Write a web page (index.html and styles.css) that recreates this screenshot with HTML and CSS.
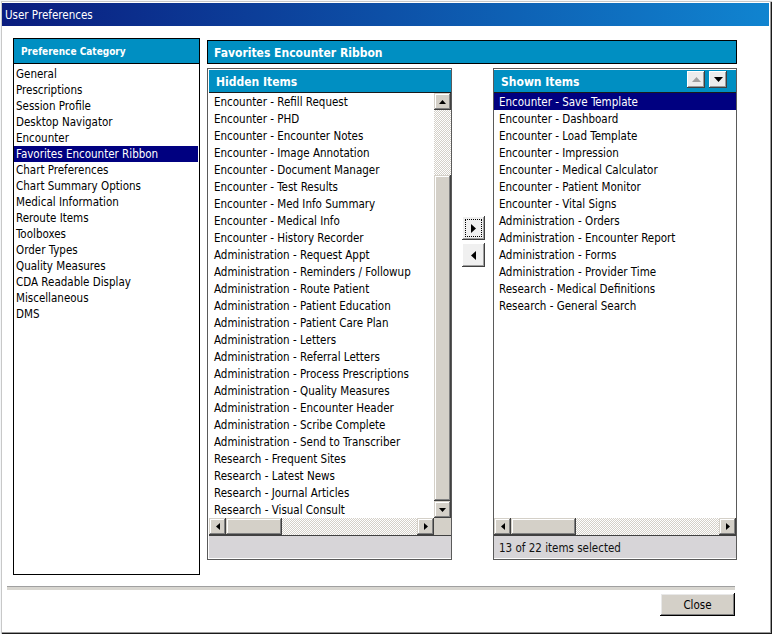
FILE: index.html
```html
<!DOCTYPE html>
<html>
<head>
<meta charset="utf-8">
<link rel="stylesheet" href="styles.css">
</head>
<body>
<div class="window">
  <div class="titlebar">User Preferences</div>
  <div class="client">
    <div class="main">
      <div class="cat-panel">
        <div class="cat-header">Preference Category</div>
        <ul class="cat-list">
          <li>General</li>
          <li>Prescriptions</li>
          <li>Session Profile</li>
          <li>Desktop Navigator</li>
          <li>Encounter</li>
          <li class="sel">Favorites Encounter Ribbon</li>
          <li>Chart Preferences</li>
          <li>Chart Summary Options</li>
          <li>Medical Information</li>
          <li>Reroute Items</li>
          <li>Toolboxes</li>
          <li>Order Types</li>
          <li>Quality Measures</li>
          <li>CDA Readable Display</li>
          <li>Miscellaneous</li>
          <li>DMS</li>
        </ul>
      </div>
      <div class="right">
        <div class="ribbon-header">Favorites Encounter Ribbon</div>
        <div class="lists">
          <div class="panel panel-hidden">
            <div class="panel-header">Hidden Items</div>
            <div class="list-wrap">
              <ul class="items">
                <li>Encounter - Refill Request</li>
                <li>Encounter - PHD</li>
                <li>Encounter - Encounter Notes</li>
                <li>Encounter - Image Annotation</li>
                <li>Encounter - Document Manager</li>
                <li>Encounter - Test Results</li>
                <li>Encounter - Med Info Summary</li>
                <li>Encounter - Medical Info</li>
                <li>Encounter - History Recorder</li>
                <li>Administration - Request Appt</li>
                <li>Administration - Reminders / Followup</li>
                <li>Administration - Route Patient</li>
                <li>Administration - Patient Education</li>
                <li>Administration - Patient Care Plan</li>
                <li>Administration - Letters</li>
                <li>Administration - Referral Letters</li>
                <li>Administration - Process Prescriptions</li>
                <li>Administration - Quality Measures</li>
                <li>Administration - Encounter Header</li>
                <li>Administration - Scribe Complete</li>
                <li>Administration - Send to Transcriber</li>
                <li>Research - Frequent Sites</li>
                <li>Research - Latest News</li>
                <li>Research - Journal Articles</li>
                <li>Research - Visual Consult</li>
              </ul>
              <div class="vscroll">
                <div class="sb-btn"><svg width="7" height="4" viewBox="0 0 7 4"><polygon points="3.5,0 7,4 0,4" fill="#000"/></svg></div>
                <div class="track vtrack-top"></div>
                <div class="thumb vthumb"></div>
                <div class="sb-btn"><svg width="7" height="4" viewBox="0 0 7 4"><polygon points="0,0 7,0 3.5,4" fill="#000"/></svg></div>
              </div>
            </div>
            <div class="hscroll">
              <div class="sb-btn"><svg width="4" height="7" viewBox="0 0 4 7"><polygon points="4,0 4,7 0,3.5" fill="#000"/></svg></div>
              <div class="thumb hthumb-hidden"></div>
              <div class="track htrack"></div>
              <div class="sb-btn"><svg width="4" height="7" viewBox="0 0 4 7"><polygon points="0,0 4,3.5 0,7" fill="#000"/></svg></div>
              <div class="corner"></div>
            </div>
            <div class="status"></div>
          </div>

          <div class="mover">
            <div class="move-btn focus"><svg width="5" height="9" viewBox="0 0 5 9"><polygon points="0,0 5,4.5 0,9" fill="#000"/></svg></div>
            <div class="move-btn"><svg width="5" height="9" viewBox="0 0 5 9"><polygon points="5,0 5,9 0,4.5" fill="#000"/></svg></div>
          </div>

          <div class="panel panel-shown">
            <div class="panel-header">
              <span class="ph-title">Shown Items</span>
              <div class="order-btn"><svg width="9" height="5" viewBox="0 0 9 5"><polygon points="4.5,0 9,5 0,5" fill="#a0a0a0"/></svg></div>
              <div class="order-btn"><svg width="9" height="5" viewBox="0 0 9 5"><polygon points="0,0 9,0 4.5,5" fill="#000"/></svg></div>
            </div>
            <div class="list-wrap">
              <ul class="items">
                <li class="sel">Encounter - Save Template</li>
                <li>Encounter - Dashboard</li>
                <li>Encounter - Load Template</li>
                <li>Encounter - Impression</li>
                <li>Encounter - Medical Calculator</li>
                <li>Encounter - Patient Monitor</li>
                <li>Encounter - Vital Signs</li>
                <li>Administration - Orders</li>
                <li>Administration - Encounter Report</li>
                <li>Administration - Forms</li>
                <li>Administration - Provider Time</li>
                <li>Research - Medical Definitions</li>
                <li>Research - General Search</li>
              </ul>
            </div>
            <div class="hscroll">
              <div class="sb-btn"><svg width="4" height="7" viewBox="0 0 4 7"><polygon points="4,0 4,7 0,3.5" fill="#000"/></svg></div>
              <div class="thumb hthumb-shown"></div>
              <div class="track htrack"></div>
              <div class="sb-btn"><svg width="4" height="7" viewBox="0 0 4 7"><polygon points="0,0 4,3.5 0,7" fill="#000"/></svg></div>
            </div>
            <div class="status">13 of 22 items selected</div>
          </div>
        </div>
      </div>
    </div>
    <div class="sep"></div>
    <div class="btnrow"><button class="close-btn">Close</button></div>
  </div>
</div>
</body>
</html>
```
FILE: styles.css
```css
* { box-sizing: border-box; margin: 0; padding: 0; }
html, body { width: 772px; height: 634px; overflow: hidden; }
body {
  background: #fff;
  font-family: "DejaVu Sans Condensed", "DejaVu Sans", sans-serif;
  font-size: 11.5px;
  color: #000;
}
ul { list-style: none; }

.window {
  width: 772px;
  height: 634px;
  display: flex;
  flex-direction: column;
  padding: 3px 3px 3px 2px;
  background: #fff;
  box-shadow: inset 1px 1px #f4f6f8, inset 2px 2px #c8c8c8, inset -1px -1px #1a1a1a, inset -2px -2px #9a9a9a;
}

.titlebar {
  height: 23px;
  flex: none;
  background: linear-gradient(90deg, #0a1c7e 0%, #1084d0 100%);
  color: #fff;
  font-size: 11.5px;
  line-height: 21px;
  padding: 2px 0 0 3px;
}

.client {
  flex: 1;
  display: flex;
  flex-direction: column;
  padding-top: 12px;
}

.main {
  display: flex;
  margin-left: 11px;
  height: 537px;
}

.cat-panel {
  width: 187px;
  height: 537px;
  border: 1px solid #000;
  background: #fff;
}
.cat-header {
  height: 25px;
  background: #008fc2;
  border-bottom: 1px solid #000;
  color: #fff;
  font-weight: bold;
  font-size: 10px;
  padding: 2px 0 0 7px;
  line-height: 22px;
}
.cat-list { padding-top: 2px; }
.cat-list li {
  height: 16px;
  line-height: 17px;
  padding-left: 2px;
  margin-right: 1px;
  white-space: nowrap;
}
.cat-list li.sel, .items li.sel { background: #000080; color: #fff; }

.right {
  margin-left: 7px;
  width: 530px;
  padding-top: 2px;
  display: flex;
  flex-direction: column;
}
.ribbon-header {
  height: 24px;
  border: 1px solid #000;
  background: #008fc2;
  color: #fff;
  font-weight: bold;
  font-size: 12px;
  padding: 2px 0 0 6px;
  line-height: 20px;
}

.lists {
  display: flex;
  margin-top: 4px;
  height: 492px;
}

.panel {
  border: 1px solid #5a5a5a;
  background: #fff;
  display: flex;
  flex-direction: column;
}
.panel-hidden { width: 245px; padding: 1px 0 1px 1px; }
.panel-shown { width: 244px; padding: 1px 0; }

.panel-header {
  height: 23px;
  flex: none;
  background: #008fc2;
  border-bottom: 1px solid #1a1a1a;
  color: #fff;
  font-weight: bold;
  font-size: 12px;
  padding: 1px 0 0 7px;
  display: flex;
  align-items: center;
}
.ph-title { flex: 1; }
.order-btn {
  width: 18px;
  height: 17px;
  margin-right: 4px;
  margin-top: -4px;
  background: #ececec;
  box-shadow: inset -1px -1px #404040, inset 1px 1px #fff, inset -2px -2px #9a9a9a;
  display: flex;
  align-items: center;
  justify-content: center;
}
.order-btn:last-child { margin-right: 9px; }

.list-wrap {
  height: 425px;
  flex: none;
  display: flex;
}
.items { flex: 1; overflow: hidden; }
.items li {
  height: 17px;
  line-height: 18px;
  padding-left: 5px;
  white-space: nowrap;
}

.vscroll {
  width: 17px;
  display: flex;
  flex-direction: column;
}
.sb-btn {
  width: 17px;
  height: 17px;
  flex: none;
  background: #d4d0c8;
  box-shadow: inset -1px -1px #404040, inset 1px 1px #d4d0c8, inset -2px -2px #808080, inset 2px 2px #fff;
  display: flex;
  align-items: center;
  justify-content: center;
}
.track {
  background-color: #fff;
  background-image: repeating-conic-gradient(#d4d0c8 0 25%, #fff 0 50%);
  background-size: 2px 2px;
}
.vtrack-top { height: 65px; flex: none; }
.thumb {
  background: #d4d0c8;
  box-shadow: inset -1px -1px #404040, inset 1px 1px #d4d0c8, inset -2px -2px #808080, inset 2px 2px #fff;
}
.vthumb { flex: 1; }

.hscroll {
  height: 17px;
  flex: none;
  display: flex;
}
.hthumb-hidden { width: 56px; flex: none; }
.hthumb-shown { width: 65px; flex: none; }
.htrack { flex: 1; }
.corner { width: 17px; background: #d4d0c8; }

.status {
  height: 23px;
  flex: none;
  border-top: 1px solid #404040;
  background: #d7d5d8;
  padding: 1px 0 0 5px;
  line-height: 22px;
  color: #111;
}

.mover {
  width: 41px;
  padding-top: 148px;
  padding-left: 1px;
  display: flex;
  flex-direction: column;
  align-items: center;
  gap: 3px;
}
.move-btn {
  width: 23px;
  height: 24px;
  background: #f0f0f0;
  box-shadow: inset -1px -1px #404040, inset 1px 1px #fff, inset -2px -2px #a0a0a0;
  display: flex;
  align-items: center;
  justify-content: center;
}
.move-btn.focus { outline: 1px dotted #000; outline-offset: -4px; }

.sep {
  margin: 11px 0 0 5px;
  width: 728px;
  height: 4px;
  border-top: 1px solid #a0a0a0;
  background: #d8d6d0;
}
.btnrow { margin-top: 3px; padding-left: 658px; }
.close-btn {
  width: 75px;
  height: 23px;
  border: none;
  background: #d4d0c8;
  box-shadow: inset -1px -1px #000, inset 1px 1px #fff, inset -2px -2px #808080, inset 2px 2px #e8e8e8;
  font-family: "DejaVu Sans Condensed", "DejaVu Sans", sans-serif;
  font-size: 11.5px;
  color: #000;
}
```
